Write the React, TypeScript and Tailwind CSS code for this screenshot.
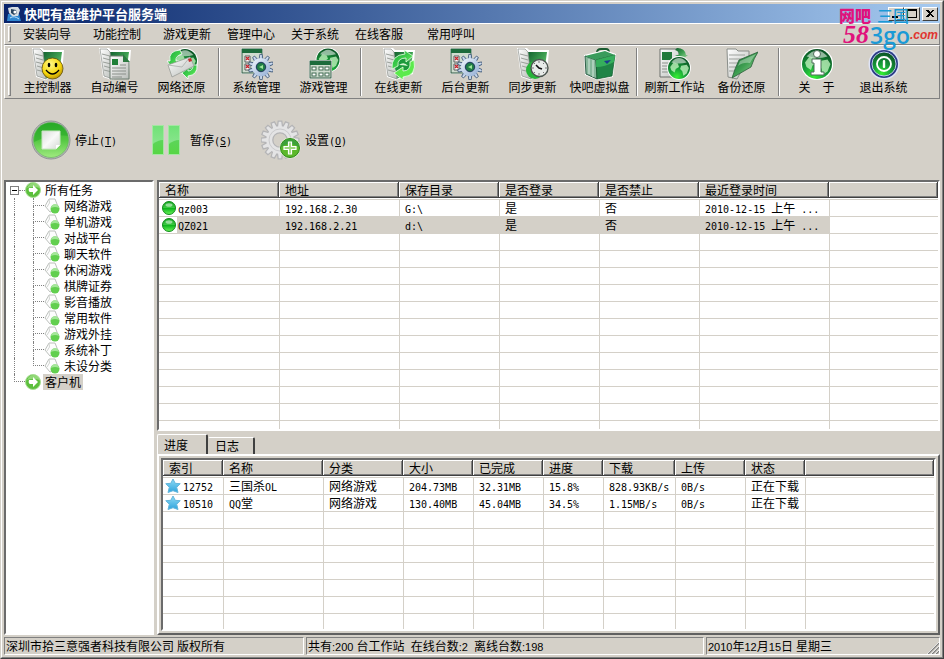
import { useState } from 'react';
import type { ReactNode } from 'react';
import clsx from 'clsx';

const sunken =
    'border-2 border-t-[#6b6b6b] border-l-[#6b6b6b] border-r-white border-b-white bg-white';
const raised = 'border border-t-white border-l-white border-r-[#808080] border-b-[#808080]';

/* ---------- text ---------- */

function Mixed({ text, narrow = false }: { text: string; narrow?: boolean }) {
    return (
        <>
            {text.split(/([\x20-\x7e]+)/).map((part, index) =>
                index % 2 === 1 ? (
                    <span
                        key={index}
                        className={
                            narrow
                                ? "font-['Liberation_Sans',sans-serif] text-[11px] leading-none"
                                : "font-['DejaVu_Sans_Mono',monospace] text-[10px] leading-none"
                        }
                    >
                        {part}
                    </span>
                ) : (
                    part
                )
            )}
        </>
    );
}

/* ---------- icons ---------- */

function IconDefs() {
    return (
        <svg className="absolute h-0 w-0" aria-hidden>
            <defs>
                <radialGradient id="globe" cx="0.4" cy="0.9" r="0.95">
                    <stop offset="0" stopColor="#35f032" />
                    <stop offset="0.4" stopColor="#17a03a" />
                    <stop offset="1" stopColor="#0a4a22" />
                </radialGradient>
                <linearGradient id="folder" x1="0" y1="0" x2="1" y2="1">
                    <stop offset="0" stopColor="#0e5c2c" />
                    <stop offset="0.5" stopColor="#3fa052" />
                    <stop offset="1" stopColor="#a9dca6" />
                </linearGradient>
                <linearGradient id="paper" x1="0" y1="0" x2="1" y2="1">
                    <stop offset="0" stopColor="#ffffff" />
                    <stop offset="1" stopColor="#b9bdb9" />
                </linearGradient>
                <radialGradient id="smile" cx="0.4" cy="0.3" r="0.8">
                    <stop offset="0" stopColor="#fff98a" />
                    <stop offset="0.6" stopColor="#f6d60a" />
                    <stop offset="1" stopColor="#a87e00" />
                </radialGradient>
                <linearGradient id="gear" x1="0" y1="0" x2="1" y2="1">
                    <stop offset="0" stopColor="#f2f7ff" />
                    <stop offset="1" stopColor="#8fabd2" />
                </linearGradient>
                <linearGradient id="swirl" x1="0" y1="0" x2="1" y2="1">
                    <stop offset="0" stopColor="#12a53a" />
                    <stop offset="1" stopColor="#6cf75c" />
                </linearGradient>
                <linearGradient id="lime" x1="0" y1="0" x2="0" y2="1">
                    <stop offset="0" stopColor="#2fae2c" />
                    <stop offset="0.5" stopColor="#55c843" />
                    <stop offset="1" stopColor="#a0ea80" />
                </linearGradient>
                <linearGradient id="bar" x1="0" y1="0" x2="0" y2="1">
                    <stop offset="0" stopColor="#6fe276" />
                    <stop offset="0.55" stopColor="#86e48a" />
                    <stop offset="1" stopColor="#7be55a" />
                </linearGradient>
                <linearGradient id="sheet" x1="0" y1="0" x2="1" y2="1">
                    <stop offset="0" stopColor="#d9dcd9" />
                    <stop offset="0.5" stopColor="#f8f9f8" />
                    <stop offset="1" stopColor="#d3d7d3" />
                </linearGradient>
                <linearGradient id="dot" x1="0" y1="0" x2="0" y2="1">
                    <stop offset="0" stopColor="#14a622" />
                    <stop offset="0.48" stopColor="#3cc942" />
                    <stop offset="0.52" stopColor="#0bb41b" />
                    <stop offset="1" stopColor="#6cf65a" />
                </linearGradient>
                <linearGradient id="star" x1="0" y1="0" x2="0" y2="1">
                    <stop offset="0" stopColor="#8edcf6" />
                    <stop offset="1" stopColor="#2fa3dc" />
                </linearGradient>
            </defs>
        </svg>
    );
}

function Globe({ cx, cy, r }: { cx: number; cy: number; r: number }) {
    return (
        <g transform={`translate(${cx} ${cy}) scale(${r / 10})`}>
            <circle r="10.8" fill="#fff" />
            <circle r="10" fill="url(#globe)" />
            <path d="M-8-1-5-5-1-4 0-1-3 1-4 4-7 2zM2-2l5-1 2 3-2 5-3 2-1-4-2-2z" fill="#c9f7c4" opacity="0.75" />
            <path d="M-7-5Q0-13 7-5 0-3-7-5z" fill="#fff" opacity="0.55" />
        </g>
    );
}

function Folder() {
    return (
        <g>
            <path d="M0 0h10l2 2h20l-2 24-17 6-9-3z" fill="#fff" />
            <path d="M9 4h21l-3 22-14 5z" fill="url(#folder)" />
            <path d="M1 1h7l3 3 3 27-9-3z" fill="url(#paper)" stroke="#8d918d" strokeWidth="0.7" />
            <path d="M3 6l8 2M4 10l7 2M4 14l8 2M5 18l7 2M5 22l8 2" stroke="#9a9f9a" fill="none" />
        </g>
    );
}

interface GearProps {
    cx: number;
    cy: number;
    r: number;
    teeth?: number;
    fill?: string;
    stroke?: string;
}

function Gear({ cx, cy, r, teeth = 10, fill = 'url(#gear)', stroke = '#3e5878' }: GearProps) {
    return (
        <g transform={`translate(${cx} ${cy}) scale(${r / 10})`} fill={fill} stroke={stroke} strokeWidth="0.7">
            {Array.from({ length: teeth }, (_, i) => (
                <path key={i} d="M-1.6-6-1-10.5h2L1.6-6z" transform={`rotate(${(i * 360) / teeth})`} />
            ))}
            <circle r="7.6" stroke="none" />
            <circle r="4" fill="#d4d0c8" />
        </g>
    );
}

function Panel({ x, y, w, h }: { x: number; y: number; w: number; h: number }) {
    return (
        <g>
            <rect x={x - 1} y={y - 1} width={w + 2} height={h + 2} fill="#fff" />
            <rect x={x} y={y} width={w} height={h} fill="#cfdccf" stroke="#2c5940" />
            <rect x={x} y={y} width={w} height="4" fill="#1c6b3c" />
        </g>
    );
}

type ToolIcon =
    | 'console' | 'number' | 'restore' | 'system' | 'game' | 'update' | 'sync'
    | 'disk' | 'station' | 'backup' | 'about' | 'exit';

const toolIcons: Record<ToolIcon, ReactNode> = {
    console: (
        <>
            <Folder />
            <circle cx="20.5" cy="20.5" r="10.5" fill="url(#smile)" stroke="#5d4a08" strokeWidth="0.8" />
            <ellipse cx="17" cy="17" rx="1.3" ry="2.2" />
            <ellipse cx="24" cy="17" rx="1.3" ry="2.2" />
            <path d="M14 22q6.5 8 13 0" fill="none" stroke="#000" strokeWidth="1.3" />
        </>
    ),
    number: (
        <>
            <Folder />
            <path d="M11 8h13l6 6v17H11z" fill="url(#paper)" stroke="#6b7a6f" />
            <path d="M24 6v8h7z" fill="#2c7a41" />
            <path d="M13 11h6v6h-6z" fill="#1f8038" />
            <path d="M13 20h14M13 23h14M13 26h14M13 29h10M21 17h6" stroke="#8a8f8a" />
        </>
    ),
    restore: (
        <>
            <Globe cx={19} cy={13} r={12} />
            <path d="M14 2Q2 3 4 13H1l6 8 6-8h-3q-1-5 6-7z" fill="url(#swirl)" stroke="#fff" strokeWidth="0.8" />
            <path d="M31 17q1 10-9 11v3l-6-6 6-5v3q5 0 5-6z" fill="url(#swirl)" stroke="#fff" strokeWidth="0.8" />
            <path d="M2 17 24 9l4 9L6 29z" fill="url(#paper)" stroke="#909590" strokeWidth="0.7" />
            <path d="M2 17l14 2 8-10" fill="none" stroke="#b5b8b5" />
            <path d="M22 11l3-1 1 3-3 1z" fill="#c62f2f" />
        </>
    ),
    system: (
        <>
            <Panel x={1} y={1} w={20} h={24} />
            <path d="M4 8h5v6H4zM4 16h5v6H4z" fill="#fff" stroke="#5a5a5a" />
            <path d="M5 9l3 3M8 9l-3 3M5 17l3 3M8 17l-3 3" stroke="#c4252c" strokeWidth="1.4" />
            <Gear cx={20} cy={19} r={12} />
            <circle cx="20" cy="19" r="4.5" fill="#207e46" stroke="#1f3f5e" />
            <path d="M18 19l4-2v4z" fill="#9be79a" />
        </>
    ),
    game: (
        <>
            <Globe cx={20} cy={12} r={11.5} />
            <Panel x={2} y={13} w={21} h={17} />
            {[4, 11, 17].map((x) =>
                [19, 25].map((y) => (
                    <rect key={`${x}-${y}`} x={x} y={y} width="4" height="3" fill="#fff" stroke="#406b52" />
                ))
            )}
        </>
    ),
    update: (
        <>
            <Folder />
            <circle cx="20" cy="19" r="8" fill="#1c9a3c" />
            <path
                d="M9 21Q8 7 22 6l-1-4 9 6-7 6v-4q-9 0-8 8z"
                fill="url(#swirl)"
                stroke="#eaffe6"
                strokeWidth="0.8"
            />
            <path
                d="M31 12q3 16-11 17v3l-9-7 9-6v4q8 0 7-9z"
                fill="#5bea4c"
                stroke="#eaffe6"
                strokeWidth="0.8"
            />
            <path d="M16 17q5-4 9 1-5-1-9-1z" fill="#d7f8d3" />
        </>
    ),
    sync: (
        <>
            <Folder />
            <circle cx="18" cy="22" r="9" fill="#27b53a" />
            <circle cx="22.5" cy="20" r="8.5" fill="#e8ebe9" stroke="#4c5550" strokeWidth="1.4" />
            <path d="M22 13v2M22 25v2M15 20h2M28 20h2M17 15l1 1M27 15l-1 1M17 25l1-1M27 25l-1-1" stroke="#777" />
            <path d="M19 17l3 3 3 1" stroke="#111" strokeWidth="1.6" fill="none" />
        </>
    ),
    disk: (
        <>
            <path d="M13 5q0-4 4-4h5q3 0 3 4" fill="none" stroke="#1a5b31" strokeWidth="2" />
            <path d="M0 7 21 2l11 4-3 23-16 3-12-5z" fill="#fff" />
            <path d="M1 8l11 4 1 19-11-5z" fill="#86b79a" stroke="#2f5f48" />
            <path d="M1 8 21 3l10 4-19 5z" fill="#3a9c5c" />
            <path d="M12 12 31 7l-3 21-15 3z" fill="#1f8446" stroke="#135a2d" strokeWidth="0.7" />
            <path d="M12 12 31 7l-1 7q-9 5-18 5z" fill="#3dbd64" opacity="0.75" />
            <path d="M20 13l3 3 4-4z" fill="#1b3d8c" />
            <path d="M5 11v15M9 12v17" stroke="#d4e6dc" />
        </>
    ),
    station: (
        <>
            <path d="M1 1h19v28H1z" fill="url(#paper)" stroke="#6c716c" />
            <path d="M3 4h10v8H3z" fill="#20793a" />
            <path d="M3 15h10M3 18h8M3 21h7M3 24h8" stroke="#8d928d" />
            <path d="M18 0q8 0 9 7h2l-5 4-8-4h4q0-4-4-5z" fill="url(#folder)" />
            <Globe cx={20} cy={20} r={11} />
        </>
    ),
    backup: (
        <>
            <path d="M1 1h9l2 2h11v6L11 31 2 29z" fill="url(#paper)" stroke="#8a8e8a" />
            <path d="M3 7h16M3 11h13M3 15h9M3 19h7M3 23h5" stroke="#9da19d" />
            <path d="M13 12 32 4q-4 6-7 15L6 30q3-10 7-18z" fill="url(#folder)" stroke="#2b5f3a" strokeWidth="0.8" />
            <path d="M14 13 30 6q-4 5-6 9-7-1-12 3z" fill="#fff" opacity="0.35" />
        </>
    ),
    about: (
        <>
            <Globe cx={16} cy={16} r={15} />
            <circle cx="16" cy="6" r="3.5" fill="#fff" stroke="#4f6c5a" />
            <path d="M11 11h9v13h3v3H10v-3h3v-9h-2z" fill="#fff" stroke="#4f6c5a" />
        </>
    ),
    exit: (
        <>
            <circle cx="16" cy="16" r="15.5" fill="#dfe4f6" />
            <circle cx="16" cy="16" r="14" fill="#2c3c86" />
            <circle cx="16" cy="16" r="12" fill="url(#globe)" stroke="#b9c4e8" />
            <circle cx="16" cy="16" r="7" fill="none" stroke="#fff" strokeWidth="1.8" />
            <rect x="14.8" y="12" width="2.4" height="8" rx="1" fill="#fff" />
        </>
    ),
};

function ToolGlyph({ name }: { name: ToolIcon }) {
    return (
        <svg viewBox="0 0 32 32" className="h-8 w-8 shrink-0" aria-hidden>
            {toolIcons[name]}
        </svg>
    );
}

function StopIcon() {
    return (
        <svg viewBox="0 0 40 40" className="h-10 w-10 shrink-0" aria-hidden>
            <circle cx="20" cy="20" r="19" fill="#b6bab8" stroke="#8e9492" />
            <circle cx="20" cy="20" r="17.5" fill="url(#lime)" stroke="#5fae58" strokeWidth="0.6" />
            <path d="M3 22Q4 3 20 3t17 13Q21 13 3 22z" fill="#1fa323" opacity="0.45" />
            <path d="M11 11h18v14l-4 4H11z" fill="url(#sheet)" stroke="#c9e6c3" />
            <path d="M25 29v-4h4z" fill="#fff" />
        </svg>
    );
}

function PauseIcon() {
    return (
        <svg viewBox="0 0 40 40" className="h-10 w-10 shrink-0" aria-hidden>
            {[6, 22].map((x) => (
                <g key={x} transform={`translate(${x} 5)`}>
                    <rect x="0.5" y="0.5" width="11" height="29" fill="url(#bar)" stroke="#a4e7a2" />
                    <path d="M1 19q5-4 10-4v14H1z" fill="#3fcc35" opacity="0.6" />
                </g>
            ))}
        </svg>
    );
}

function SettingsIcon() {
    return (
        <svg viewBox="0 0 40 40" className="h-10 w-10 shrink-0" aria-hidden>
            <Gear cx={19} cy={20} r={18} teeth={16} fill="#e4e4e5" stroke="#b4b4b6" />
            <circle cx="19" cy="20" r="11" fill="none" stroke="#cacacc" />
            <circle cx="29" cy="28" r="10.5" fill="#e7f3d9" />
            <circle cx="29" cy="28" r="9.5" fill="#5cb82a" stroke="#2f8a1c" />
            <path d="M20 27q9-6 18 0-2-8-9-8t-9 8z" fill="#2f9740" opacity="0.7" />
            <path
                d="M27.5 22h3v4.500H35v3h-4.500V34h-3v-4.500H23v-3h4.500z"
                fill="#9cd67c"
                stroke="#fff"
                strokeWidth="1.2"
            />
        </svg>
    );
}

function ArrowBall() {
    return (
        <svg viewBox="0 0 16 16" className="h-4 w-4 shrink-0" aria-hidden>
            <circle cx="8" cy="8" r="7.5" fill="#5cbf3c" stroke="#a7dd94" />
            <path d="M2 6q2-5 7-5t6 5Q8 4 2 6z" fill="#a6e38f" opacity="0.7" />
            <path d="M4 6h4V3l5 5-5 5v-3H5Q3 9 4 6z" fill="#fff" />
        </svg>
    );
}

function PageBall() {
    return (
        <svg viewBox="0 0 16 16" className="h-4 w-4 shrink-0" aria-hidden>
            <path d="M5 1h6l4 10-9 3-5-6z" fill="#fdfdfd" stroke="#bcc0bc" />
            <path d="M5 1q2 4-2 8" fill="none" stroke="#d2d5d2" />
            <circle cx="11" cy="11" r="4.5" fill="#62cf4f" />
            <path d="M7 10q4-2 8 0-1-4-4-4t-4 4z" fill="#a5e69a" />
        </svg>
    );
}

function StatusDot() {
    return (
        <svg viewBox="0 0 14 14" className="h-[14px] w-[14px] shrink-0" aria-hidden>
            <circle cx="7" cy="7" r="6.5" fill="url(#dot)" stroke="#128a1c" />
            <ellipse cx="7" cy="4" rx="3.5" ry="1.8" fill="#fff" opacity="0.5" />
        </svg>
    );
}

function StarIcon() {
    return (
        <svg viewBox="0 0 16 16" className="h-4 w-4 shrink-0" aria-hidden>
            <path
                d="M8 1l2.200 4.300 5 .4-3.500 3.600L13 14.500l-5-1.800-5 1.800 1.300-5.200L.8 5.700l5-.4z"
                fill="url(#star)"
                stroke="#63b6dc"
                strokeLinejoin="round"
            />
        </svg>
    );
}

function AppIcon() {
    return (
        <svg viewBox="0 0 16 16" className="h-4 w-4 shrink-0" aria-hidden>
            <path d="M2 8h11l2 7H1z" fill="#2f86d0" />
            <path d="M2 2l4-1h6l2 3-2 6H6L3 7z" fill="#d7dde2" />
            <path d="M5 3l5 1 1 3-3 2-3-2z" fill="#27425e" />
            <circle cx="9" cy="6" r="1.6" fill="#fff" />
            <path d="M4 12q4-3 9 1" stroke="#bfe3fb" fill="none" />
        </svg>
    );
}

/* ---------- title and menu ---------- */

function CaptionButton({ label, children }: { label: string; children: ReactNode }) {
    return (
        <button
            type="button"
            aria-label={label}
            className="flex h-[14px] w-4 items-center justify-center border border-t-white border-l-white border-r-[#404040] border-b-[#404040] bg-[#d4d0c8]"
        >
            <svg viewBox="0 0 12 10" className="h-[10px] w-3 shrink-0" shapeRendering="crispEdges" aria-hidden>
                {children}
            </svg>
        </button>
    );
}

function Watermark() {
    return (
        <div className="pointer-events-none absolute top-1 right-0 w-[104px]">
            <div className="flex h-5 items-center leading-5">
                <span className="font-['Noto_Sans_CJK_SC',sans-serif] text-[16px] font-black text-[#e0127c]">网吧</span>
                <span className="ml-1.5 font-['Noto_Sans_CJK_SC',sans-serif] text-[16px] font-medium text-[#1b9ad6]">三国</span>
            </div>
            <div className="flex h-5 items-center leading-5">
                <span className="ml-1 font-['Liberation_Serif',serif] text-[26px] font-bold text-[#e0127c] italic">58</span>
                <span className="ml-px font-['Open_Sans',sans-serif] text-[23px] font-semibold text-[#1b9ad6]">3go</span>
                <span className="font-['Liberation_Sans',sans-serif] text-[12px] font-bold text-[#e0352f] italic">.com</span>
            </div>
        </div>
    );
}

function TitleBar() {
    return (
        <header className="flex h-[19px] shrink-0 items-center bg-linear-to-r from-[#0a246a] to-[#a6caf0] px-[2px]">
            <AppIcon />
            <h1 className="ml-[2px] flex-1 text-[13px] leading-[18px] font-bold text-white">
                快吧有盘维护平台服务端
            </h1>
            <CaptionButton label="最小化">
                <path d="M2 7h6v2H2z" />
            </CaptionButton>
            <CaptionButton label="最大化">
                <path d="M1 0h10v9H1zM2 2v6h8V2z" fillRule="evenodd" />
            </CaptionButton>
            <span className="w-[2px]" />
            <CaptionButton label="关闭">
                <path d="M2 1h2l2 2 2-2h2L7 4.500 10 8H8L6 6 4 8H2l3-3.500z" />
            </CaptionButton>
        </header>
    );
}

function Gripper() {
    return <span className={clsx(raised, 'w-[3px] shrink-0 self-stretch')} />;
}

const menus = [
    { label: '安装向导', space: 'ml-1' },
    { label: '功能控制', space: 'ml-1.5' },
    { label: '游戏更新', space: 'ml-1.5' },
    { label: '管理中心', space: '' },
    { label: '关于系统', space: '' },
    { label: '在线客服', space: '' },
    { label: '常用呼叫', space: 'ml-2' },
];

function MenuBar() {
    return (
        <nav className={clsx(raised, 'flex h-[22px] shrink-0 items-center py-[2px] pl-[3px]')}>
            <Gripper />
            {menus.map((menu) => (
                <button key={menu.label} type="button" className={clsx('px-2 leading-4', menu.space)}>
                    {menu.label}
                </button>
            ))}
        </nav>
    );
}

/* ---------- toolbars ---------- */

const toolGroups: { label: string; icon: ToolIcon }[][] = [
    [
        { label: '主控制器', icon: 'console' },
        { label: '自动编号', icon: 'number' },
        { label: '网络还原', icon: 'restore' },
    ],
    [
        { label: '系统管理', icon: 'system' },
        { label: '游戏管理', icon: 'game' },
    ],
    [
        { label: '在线更新', icon: 'update' },
        { label: '后台更新', icon: 'system' },
        { label: '同步更新', icon: 'sync' },
        { label: '快吧虚拟盘', icon: 'disk' },
    ],
    [
        { label: '刷新工作站', icon: 'station' },
        { label: '备份还原', icon: 'backup' },
    ],
    [
        { label: '关\u3000于', icon: 'about' },
        { label: '退出系统', icon: 'exit' },
    ],
];

function ToolBar() {
    return (
        <div role="toolbar" className={clsx(raised, 'flex h-[54px] shrink-0 items-center py-[2px] pl-[3px]')}>
            <Gripper />
            <span className="w-[3px]" />
            {toolGroups.map((group, index) => (
                <div key={index} className="flex self-stretch">
                    {index > 0 && (
                        <span className="mx-[3px] w-[2px] border-r border-l border-r-white border-l-[#808080]" />
                    )}
                    {group.map((tool) => (
                        <button
                            key={tool.label}
                            type="button"
                            className="flex w-[67px] flex-col items-center leading-[14px] whitespace-nowrap"
                        >
                            <ToolGlyph name={tool.icon} />
                            {tool.label}
                        </button>
                    ))}
                </div>
            ))}
        </div>
    );
}

const actions = [
    { label: '停止', accessKey: 'T', icon: <StopIcon /> },
    { label: '暂停', accessKey: 'S', icon: <PauseIcon /> },
    { label: '设置', accessKey: 'O', icon: <SettingsIcon /> },
];

function ActionBar() {
    return (
        <div className="flex h-[81px] shrink-0 items-center pl-[27px]">
            {actions.map((action) => (
                <button
                    key={action.accessKey}
                    type="button"
                    accessKey={action.accessKey}
                    className="flex w-[115px] items-center gap-1 leading-4"
                >
                    {action.icon}
                    <span>
                        {action.label}
                        <span className="font-['DejaVu_Sans_Mono',monospace] text-[10px] leading-none">
                            (<u>{action.accessKey}</u>)
                        </span>
                    </span>
                </button>
            ))}
        </div>
    );
}

/* ---------- task tree ---------- */

const categories = [
    '网络游戏', '单机游戏', '对战平台', '聊天软件', '休闲游戏', '棋牌证券',
    '影音播放', '常用软件', '游戏外挂', '系统补丁', '未设分类',
];

function Branch({ last = false }: { last?: boolean }) {
    return (
        <span className="flex h-4 w-[11px] shrink-0 flex-col">
            <span className="h-2 border-b border-l border-dotted border-[#808080]" />
            {!last && <span className="h-2 border-l border-dotted border-[#808080]" />}
        </span>
    );
}

function TaskTree() {
    return (
        <aside className={clsx(sunken, 'w-[150px] shrink-0 overflow-hidden')}>
            <ul className="leading-4">
                <li>
                    <div className="flex h-4 items-center pl-1">
                        <button
                            type="button"
                            aria-label="折叠"
                            className="flex h-[9px] w-[9px] items-center justify-center border border-[#808080]"
                        >
                            <span className="h-px w-[5px] bg-black" />
                        </button>
                        <span className="w-[6px] border-b border-dotted border-[#808080]" />
                        <ArrowBall />
                        <span className="pl-1">所有任务</span>
                    </div>
                    <ul>
                        {categories.map((name, index) => (
                            <li key={name} className="flex h-4 items-center pl-2">
                                <span className="h-4 w-[19px] border-l border-dotted border-[#808080]" />
                                <Branch last={index === categories.length - 1} />
                                <PageBall />
                                <span className="pl-1">{name}</span>
                            </li>
                        ))}
                    </ul>
                </li>
                <li className="flex h-4 items-center pl-2">
                    <Branch last />
                    <ArrowBall />
                    <span className="ml-[2px] bg-[#d4d0c8] px-[2px]">客户机</span>
                </li>
            </ul>
        </aside>
    );
}

/* ---------- lists ---------- */

interface Column {
    title: string;
    width: string;
}

interface ListProps {
    columns: Column[];
    rows: string[][];
    icon: ReactNode;
    iconInset: string;
    selected?: number;
    lines: number;
}

function ListView({ columns, rows, icon, iconInset, selected, lines }: ListProps) {
    const blank = Array.from({ length: lines - rows.length }, (_, i) => i);

    return (
        <div className={clsx(sunken, 'min-h-0 flex-1 overflow-hidden')}>
            <table className="w-full table-fixed border-separate border-spacing-0 whitespace-pre">
                <colgroup>
                    {columns.map((column) => (
                        <col key={column.title} className={column.width} />
                    ))}
                    <col />
                </colgroup>
                <thead>
                    <tr>
                        {[...columns.map((column) => column.title), ''].map((title) => (
                            <th key={title} className="border-b border-[#d4d0c8] p-0 pb-px text-left font-normal">
                                <div className="h-4 bg-[#d4d0c8] pl-[6px] leading-4 shadow-[inset_-1px_-1px_0_#404040,inset_1px_1px_0_#fff,inset_-2px_-2px_0_#808080]">
                                    {title}
                                </div>
                            </th>
                        ))}
                    </tr>
                </thead>
                <tbody>
                    {rows.map((row, rowIndex) => (
                        <tr key={row[0]}>
                            {row.map((value, index) => (
                                <td
                                    key={columns[index].title}
                                    className={clsx(
                                        'h-[17px] border-b border-[#d4d0c8] p-0 leading-4',
                                        index > 0 && 'border-l pl-[5px]',
                                        index > 0 && rowIndex === selected && 'bg-[#d4d0c8]'
                                    )}
                                >
                                    {index === 0 ? (
                                        <div className={clsx('flex h-4 items-center', iconInset)}>
                                            {icon}
                                            <span
                                                className={clsx(
                                                    'ml-px h-4 flex-1 pl-px',
                                                    rowIndex === selected && 'bg-[#d4d0c8]'
                                                )}
                                            >
                                                <Mixed text={value} />
                                            </span>
                                        </div>
                                    ) : (
                                        <div className="h-4">
                                            <Mixed text={value} />
                                        </div>
                                    )}
                                </td>
                            ))}
                            <td className="border-b border-l border-[#d4d0c8] p-0" />
                        </tr>
                    ))}
                    {blank.map((line) => (
                        <tr key={line}>
                            <td className="h-[17px] border-b border-[#d4d0c8] p-0" />
                            {columns.map((column) => (
                                <td key={column.title} className="border-b border-l border-[#d4d0c8] p-0" />
                            ))}
                        </tr>
                    ))}
                </tbody>
            </table>
        </div>
    );
}

const clientColumns: Column[] = [
    { title: '名称', width: 'w-[120px]' },
    { title: '地址', width: 'w-[120px]' },
    { title: '保存目录', width: 'w-[100px]' },
    { title: '是否登录', width: 'w-[100px]' },
    { title: '是否禁止', width: 'w-[100px]' },
    { title: '最近登录时间', width: 'w-[130px]' },
];

const clients = [
    ['qz003', '192.168.2.30', 'G:\\', '是', '否', '2010-12-15 上午 ...'],
    ['QZ021', '192.168.2.21', 'd:\\', '是', '否', '2010-12-15 上午 ...'],
];

const taskColumns: Column[] = [
    { title: '索引', width: 'w-[60px]' },
    { title: '名称', width: 'w-[100px]' },
    { title: '分类', width: 'w-[80px]' },
    { title: '大小', width: 'w-[70px]' },
    { title: '已完成', width: 'w-[70px]' },
    { title: '进度', width: 'w-[60px]' },
    { title: '下载', width: 'w-[72px]' },
    { title: '上传', width: 'w-[70px]' },
    { title: '状态', width: 'w-[60px]' },
];

const tasks = [
    ['12752', '三国杀OL', '网络游戏', '204.73MB', '32.31MB', '15.8%', '828.93KB/s', '0B/s', '正在下载'],
    ['10510', 'QQ堂', '网络游戏', '130.40MB', '45.04MB', '34.5%', '1.15MB/s', '0B/s', '正在下载'],
];

const tabs = ['进度', '日志'];

function TaskPanel() {
    const [active, setActive] = useState('进度');

    return (
        <section className="flex h-[201px] shrink-0 flex-col">
            <div role="tablist" className="flex h-5 items-end">
                {tabs.map((tab) => (
                    <button
                        key={tab}
                        type="button"
                        role="tab"
                        aria-selected={tab === active}
                        onClick={() => setActive(tab)}
                        className={clsx(
                            'rounded-t-[2px] border-t border-r-2 border-l border-t-white border-r-[#404040] px-[6px] text-left leading-4',
                            tab === active ? 'h-5 w-[51px] border-l-white' : 'h-[17px] w-[47px] border-l-transparent'
                        )}
                    >
                        {tab}
                    </button>
                ))}
            </div>
            <div className="flex min-h-0 flex-1 flex-col border-2 border-t-white border-r-[#606060] border-b-[#606060] border-l-white p-[2px]">
                <ListView
                    columns={taskColumns}
                    rows={active === '进度' ? tasks : []}
                    icon={<StarIcon />}
                    iconInset="pl-[2px]"
                    lines={9}
                />
            </div>
        </section>
    );
}

function StatusBar() {
    const cell = 'border border-t-[#808080] border-l-[#808080] border-r-white border-b-white pl-px';

    return (
        <footer className="flex h-[20px] shrink-0 gap-[2px] pt-[2px] leading-4 whitespace-pre">
            <div className={clsx(cell, 'w-[300px]')}>
                <Mixed narrow text="深圳市拾三意强者科技有限公司 版权所有" />
            </div>
            <div className={clsx(cell, 'w-[398px]')}>
                <Mixed narrow text="共有:200 台工作站  在线台数:2  离线台数:198" />
            </div>
            <div className={clsx(cell, 'flex flex-1 items-end justify-between')}>
                <span>
                    <Mixed narrow text="2010年12月15日 星期三" />
                </span>
                <svg viewBox="0 0 12 12" className="h-3 w-3" aria-hidden>
                    <path d="M1 12 12 1M5 12l7-7M9 12l3-3" stroke="#808080" strokeWidth="1.5" />
                    <path d="M0 12 12 0M4 12l8-8M8 12l4-4" stroke="#fff" strokeWidth="0.7" />
                </svg>
            </div>
        </footer>
    );
}

export default function App() {
    return (
        <div className="relative flex h-screen flex-col border border-t-[#d4d0c8] border-l-[#d4d0c8] border-r-[#404040] border-b-[#404040] bg-[#d4d0c8] font-['Noto_Sans_CJK_SC',sans-serif] text-xs text-black">
            <IconDefs />
            <div className={clsx(raised, 'flex min-h-0 flex-1 flex-col p-[2px]')}>
                <TitleBar />
                <MenuBar />
                <ToolBar />
                <ActionBar />
                <main className="flex min-h-0 flex-1 gap-[3px]">
                    <TaskTree />
                    <div className="flex min-w-0 flex-1 flex-col gap-[3px]">
                        <ListView
                            columns={clientColumns}
                            rows={clients}
                            icon={<StatusDot />}
                            iconInset="pl-[3px]"
                            selected={1}
                            lines={14}
                        />
                        <TaskPanel />
                    </div>
                </main>
                <StatusBar />
            </div>
            <Watermark />
        </div>
    );
}
